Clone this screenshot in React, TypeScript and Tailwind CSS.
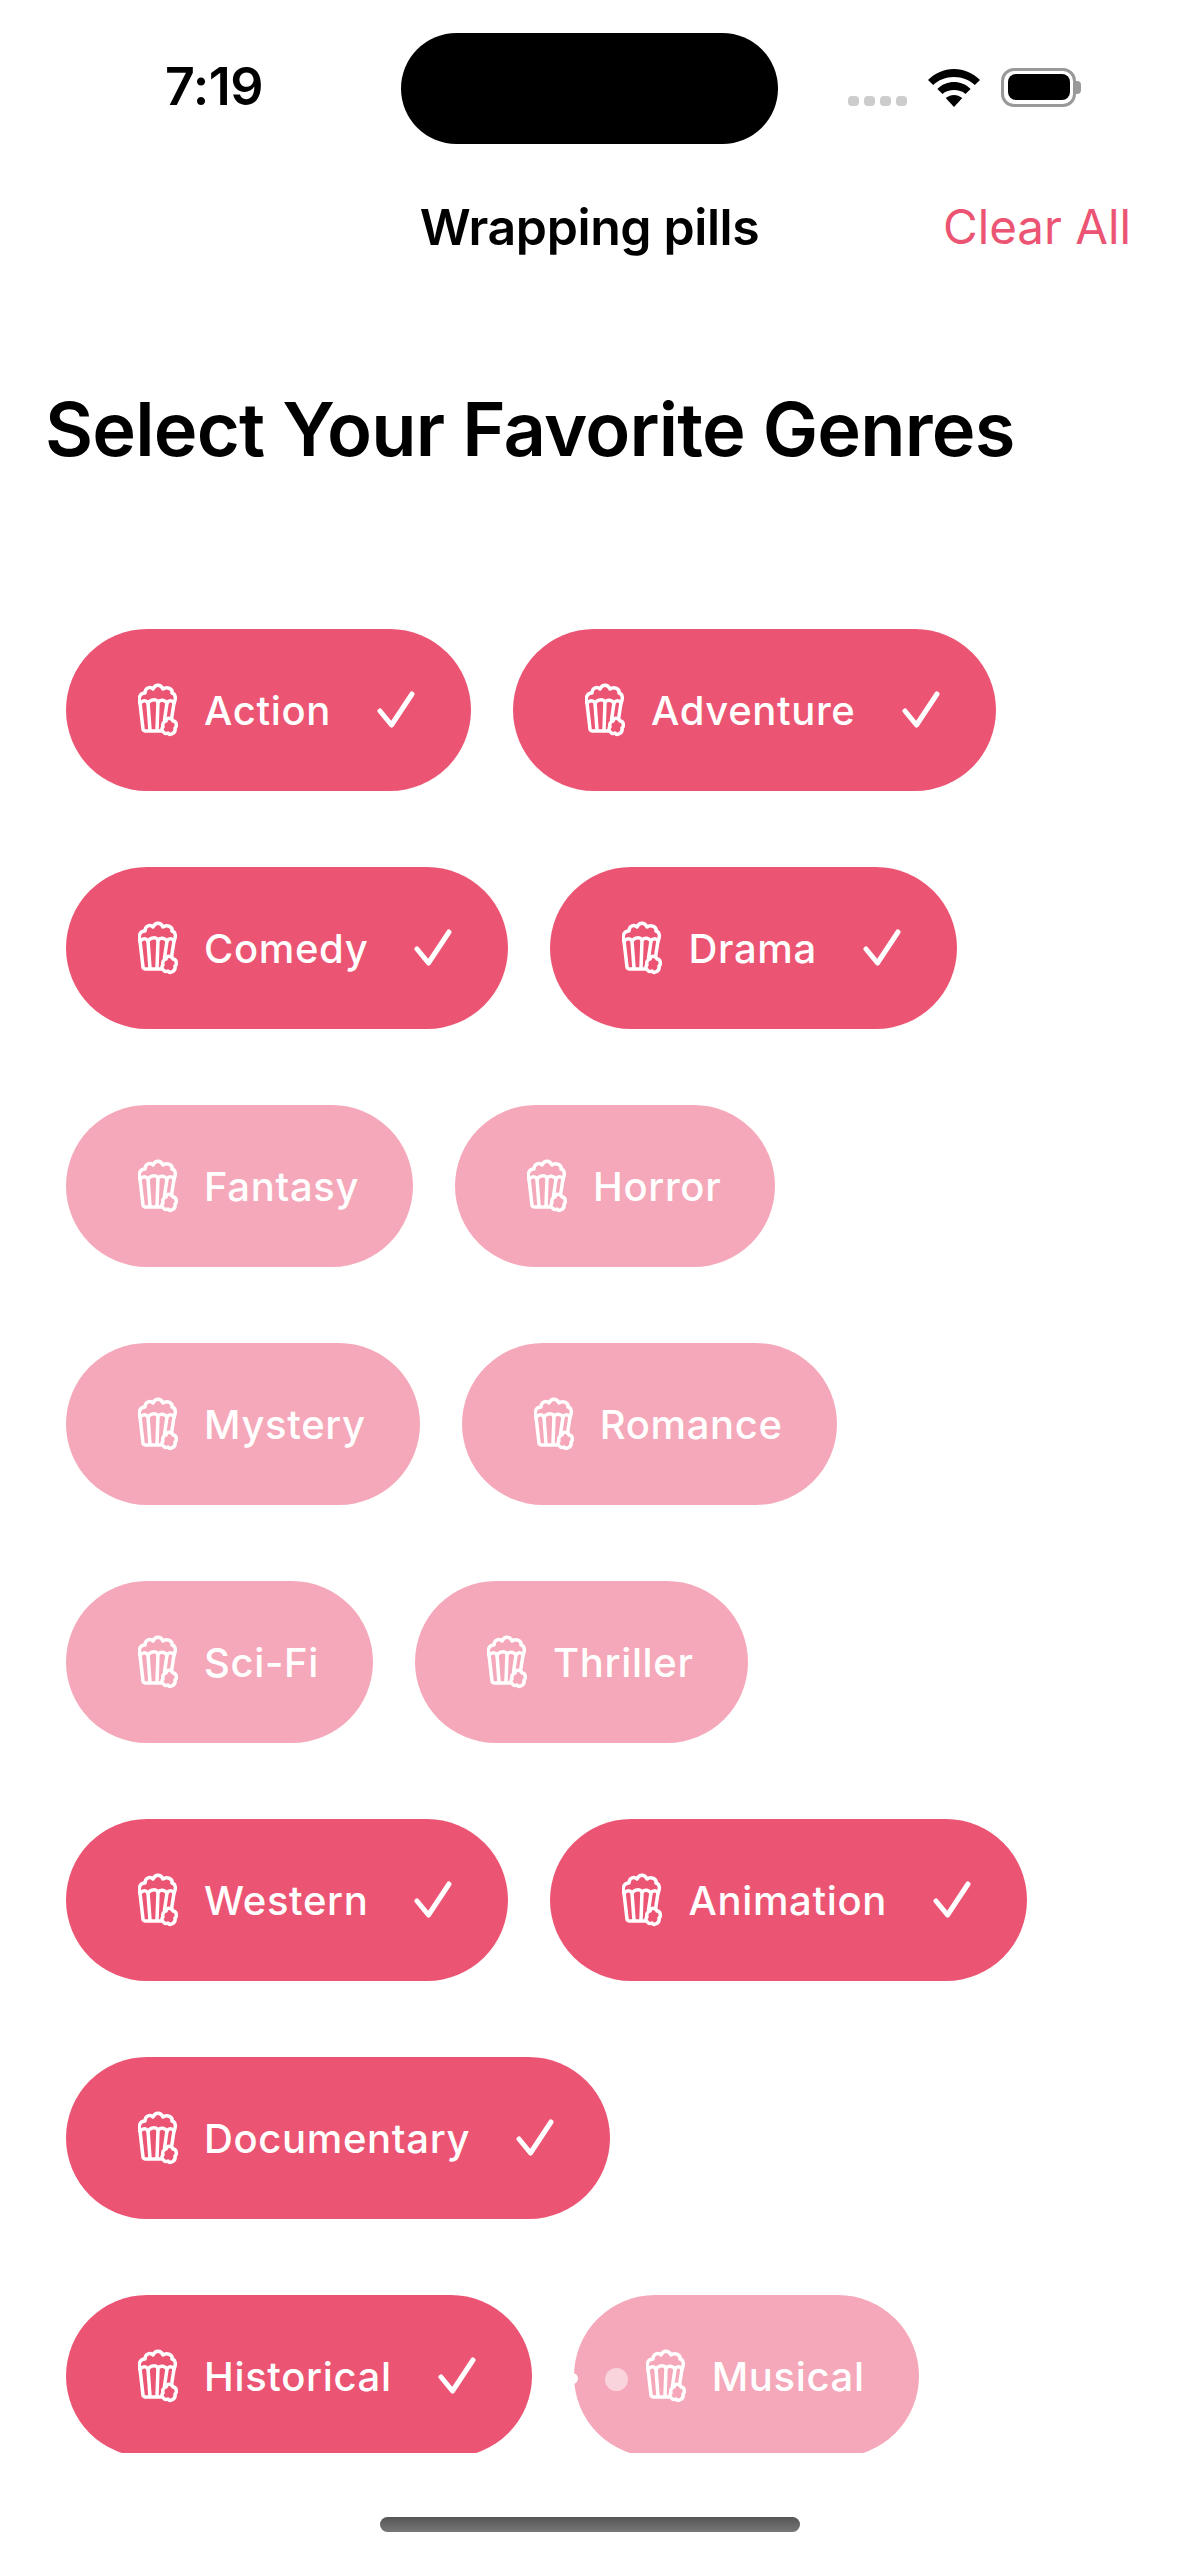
const genres: [string, boolean][] = [
  ["Action", true], ["Adventure", true], ["Comedy", true], ["Drama", true],
  ["Fantasy", false], ["Horror", false], ["Mystery", false], ["Romance", false],
  ["Sci-Fi", false], ["Thriller", false], ["Western", true], ["Animation", true],
  ["Documentary", true], ["Historical", true], ["Musical", false],
];

function Popcorn() {
  return (
    <svg width="40" height="54" viewBox="0 0 40 54" fill="none" stroke="white" strokeWidth="3.5" strokeLinecap="round" strokeLinejoin="round" className="shrink-0">
      <path d="M2 20 C0 15 2 10 7 10 C7 5 12 3 15 6 C17 1 23 1 25 6 C29 3 35 6 34 10 C38 11 38 16 36 20" />
      <path d="M2 20 C5 17 8 17 10 20 C13 16 18 16 20 19 C23 16 27 17 29 20 C31 17 34 17 36 20" />
      <path d="M2 20 L5 46 C5 47 6 48 7 48 L23 48" />
      <path d="M10 20 L12 47" />
      <path d="M20 19 L19 47" />
      <path d="M29 20 L26.5 37" />
      <path d="M36 20 L33.5 36" />
      <path d="M28 38 C29 34 34 35 35 38 C39 38 39 44 37 45 C38 50 32 53 30 50 C26 52 22 46 25 44 C24 41 26 38 28 38 Z" />
    </svg>
  );
}

function Check() {
  return (
    <svg width="38" height="38" viewBox="0 0 38 38" fill="none" stroke="white" strokeWidth="5" strokeLinecap="round" strokeLinejoin="round" className="shrink-0">
      <path d="M3 20 L14.5 34 L35 3" />
    </svg>
  );
}

function Pill({ name, on }: { name: string; on: boolean }) {
  return (
    <div className={`relative h-[162px] rounded-[81px] flex items-center pl-[72px] ${on ? "bg-[#ec5473] pr-[56px]" : "bg-[#f5a8b9] pr-[54px]"}`}>
      {name === "Musical" && (
        <>
          <span className="absolute left-[-7px] top-[78px] w-[11px] h-[11px] rounded-full bg-white" />
          <span className="absolute left-[31px] top-[73px] w-[23px] h-[23px] rounded-full bg-white/50" />
        </>
      )}
      <Popcorn />
      <span className={`ml-[26px] pt-[2px] text-[40px] leading-[48px] font-[550] text-white tracking-[0.65px] ${on ? "mr-[46px]" : ""}`}>{name}</span>
      {on && <Check />}
    </div>
  );
}

export default function App() {
  return (
    <div className="relative w-[1179px] h-[2556px] overflow-hidden bg-white flex flex-col font-['Inter',sans-serif] text-black">
      <div className="relative h-[174px] shrink-0 flex items-center justify-between pl-[165px] pr-[98px]">
        <span className="text-[52px] leading-[56px] font-semibold tracking-[-0.5px]">7:19</span>
        <div className="absolute left-[401px] top-[33px] w-[377px] h-[111px] rounded-[56px] bg-black" />
        <div className="flex items-end gap-[21px]">
          <div className="flex gap-[5px] mb-[1px]">
            {[0, 1, 2, 3].map((i) => <span key={i} className="w-[11px] h-[10px] rounded-[4px] bg-[#cccccc]" />)}
          </div>
          <svg width="52" height="38" viewBox="0 0 50 38" preserveAspectRatio="none" fill="black">
            <path d="M25 0 C35 0 43 4 50 11 L45 16 C40 11 33 8 25 8 C17 8 10 11 5 16 L0 11 C7 4 15 0 25 0 Z" />
            <path d="M25 13 C31 13 36 15 41 20 L36 25 C33 22 29 21 25 21 C21 21 17 22 14 25 L9 20 C14 15 19 13 25 13 Z" />
            <path d="M25 26 C28 26 30 27 33 29 L25 38 L17 29 C20 27 22 26 25 26 Z" />
          </svg>
          <div className="flex items-center">
            <div className="w-[75px] h-[39px] rounded-[13px] border-[3.5px] border-[#999999] p-[3.5px]">
              <div className="w-full h-full rounded-[8px] bg-black" />
            </div>
            <div className="w-[5px] h-[13px] rounded-r-[4px] bg-[#999999]" />
          </div>
        </div>
      </div>

      <div className="grid grid-cols-[1fr_auto_1fr] items-center pr-[48px] h-[106px] shrink-0">
        <span />
        <span className="text-[50px] leading-[60px] font-semibold tracking-[-0.4px] pl-[48px]">Wrapping pills</span>
        <span className="justify-self-end text-[47.5px] leading-[60px] text-[#ec5473]">Clear All</span>
      </div>

      <h1 className="mt-[106px] pl-[45px] text-[74px] leading-[86px] font-semibold tracking-[-0.8px] shrink-0">Select Your Favorite Genres</h1>

      <div className="mt-[157px] h-[1824px] shrink-0 overflow-hidden pl-[66px] pr-[80px] flex flex-wrap content-start gap-x-[42px] gap-y-[76px]">
        {genres.map(([n, on]) => <Pill key={n} name={n} on={on} />)}
      </div>

      <div className="mt-[64px] mx-auto w-[420px] h-[15px] rounded-full bg-gradient-to-b from-[#555555] to-[#777777] shrink-0" />
    </div>
  );
}
